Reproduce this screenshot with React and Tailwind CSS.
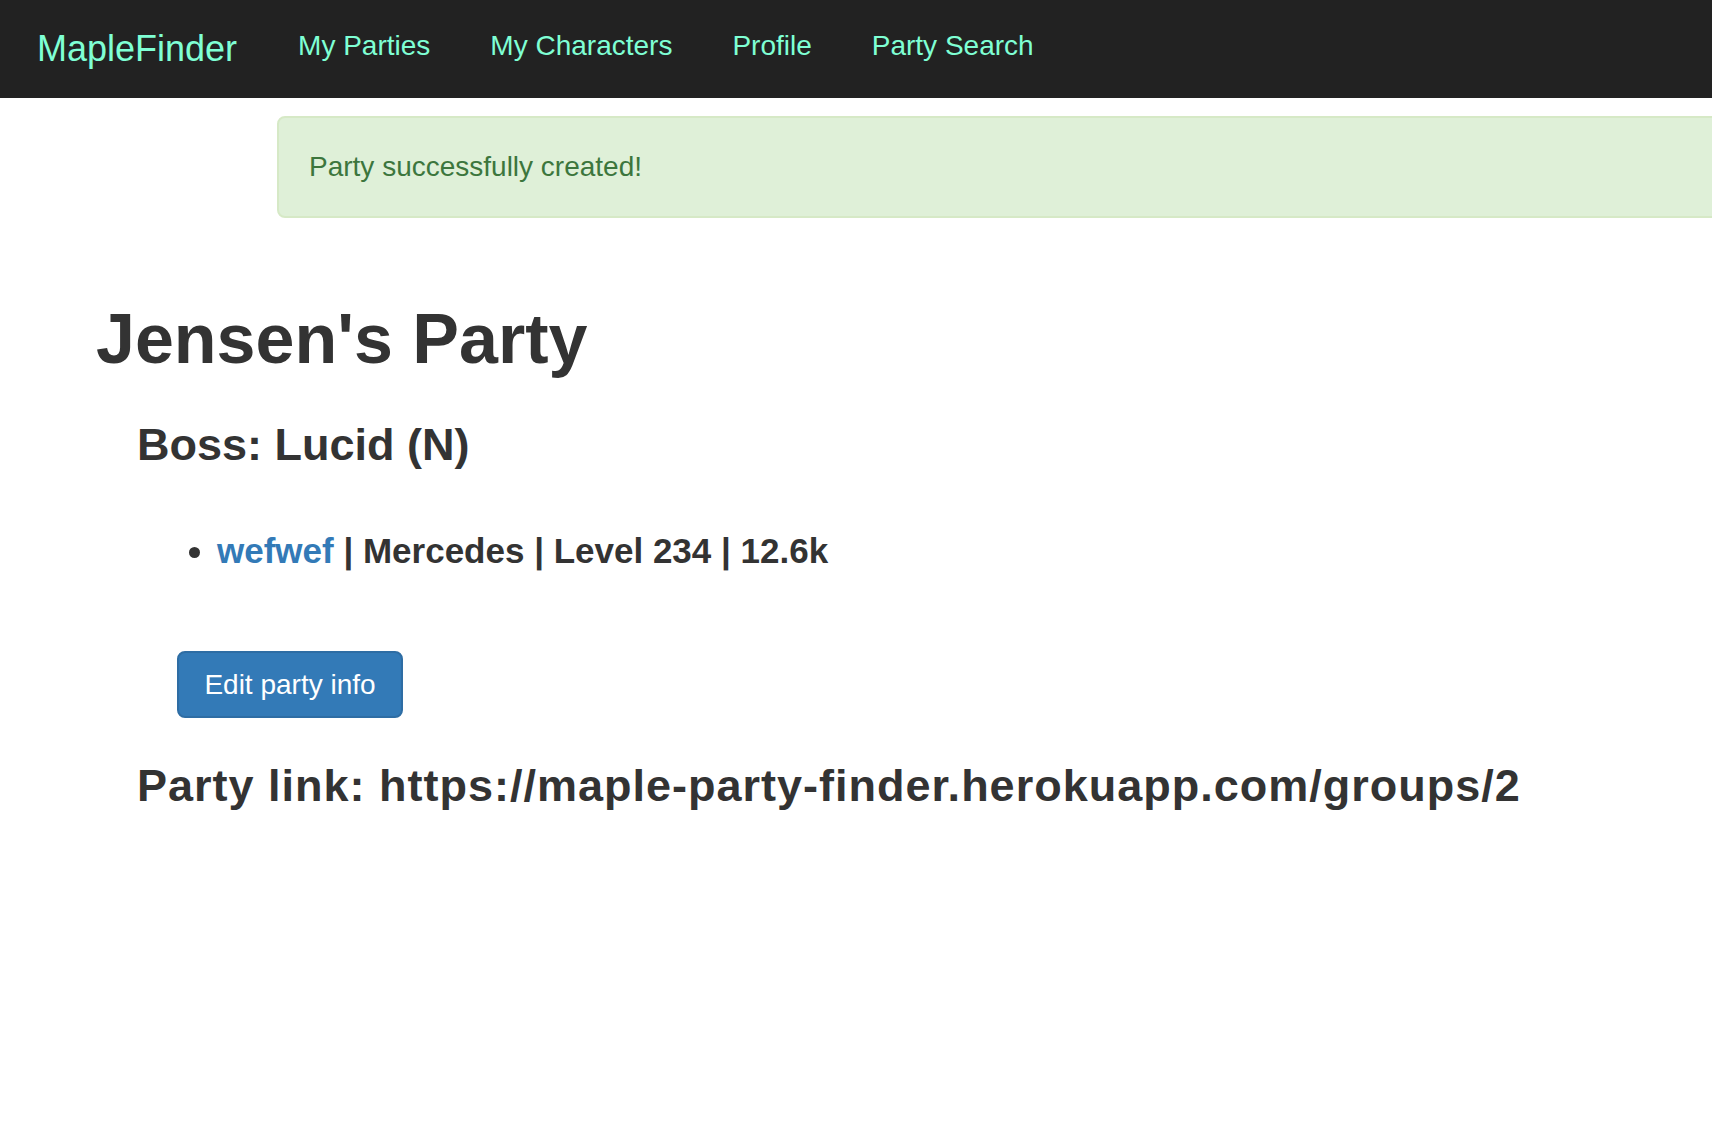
import React from "react";

export default function App() {
  const font = { fontFamily: '"Liberation Sans", Arial, Helvetica, sans-serif' };
  return (
    <div className="min-h-[1137px] w-full overflow-hidden bg-white text-[#333]" style={font}>
      <nav className="flex h-[98px] items-center bg-[#222]">
        <a className="ml-[37px] text-[36px] leading-none text-[#7fffd4]">MapleFinder</a>
        <ul className="mb-[6px] ml-[61px] flex gap-[60px] text-[28px] leading-none text-[#7fffd4]">
          <li>My Parties</li>
          <li>My Characters</li>
          <li>Profile</li>
          <li>Party Search</li>
        </ul>
      </nav>

      <div className="ml-[277px] mt-[18px] flex h-[102px] w-[1600px] items-center rounded-lg border-2 border-[#d6e9c6] bg-[#dff0d8] pl-[30px] text-[28px] text-[#3c763d]">
        Party successfully created!
      </div>

      <h1 className="ml-[96px] mt-[81px] text-[70px] font-bold leading-[80px]">Jensen's Party</h1>

      <div className="ml-[137px]">
        <h3 className="mt-[38px] text-[45px] font-bold leading-[56px]">Boss: Lucid (N)</h3>

        <ul className="mt-[54px] list-disc pl-[80px] text-[35px] font-bold leading-[48px]">
          <li>
            <a className="text-[#337ab7]">wefwef</a> | Mercedes | Level 234 | 12.6k
          </li>
        </ul>

        <button className="ml-[40px] mt-[76px] flex h-[67px] w-[226px] items-center justify-center rounded-lg border-2 border-[#2e6da4] bg-[#337ab7] text-[28px] text-white">
          Edit party info
        </button>

        <h3 className="mt-[40px] text-[45px] font-bold leading-[56px] tracking-[1px]">
          Party link: https://maple-party-finder.herokuapp.com/groups/2
        </h3>
      </div>
    </div>
  );
}
